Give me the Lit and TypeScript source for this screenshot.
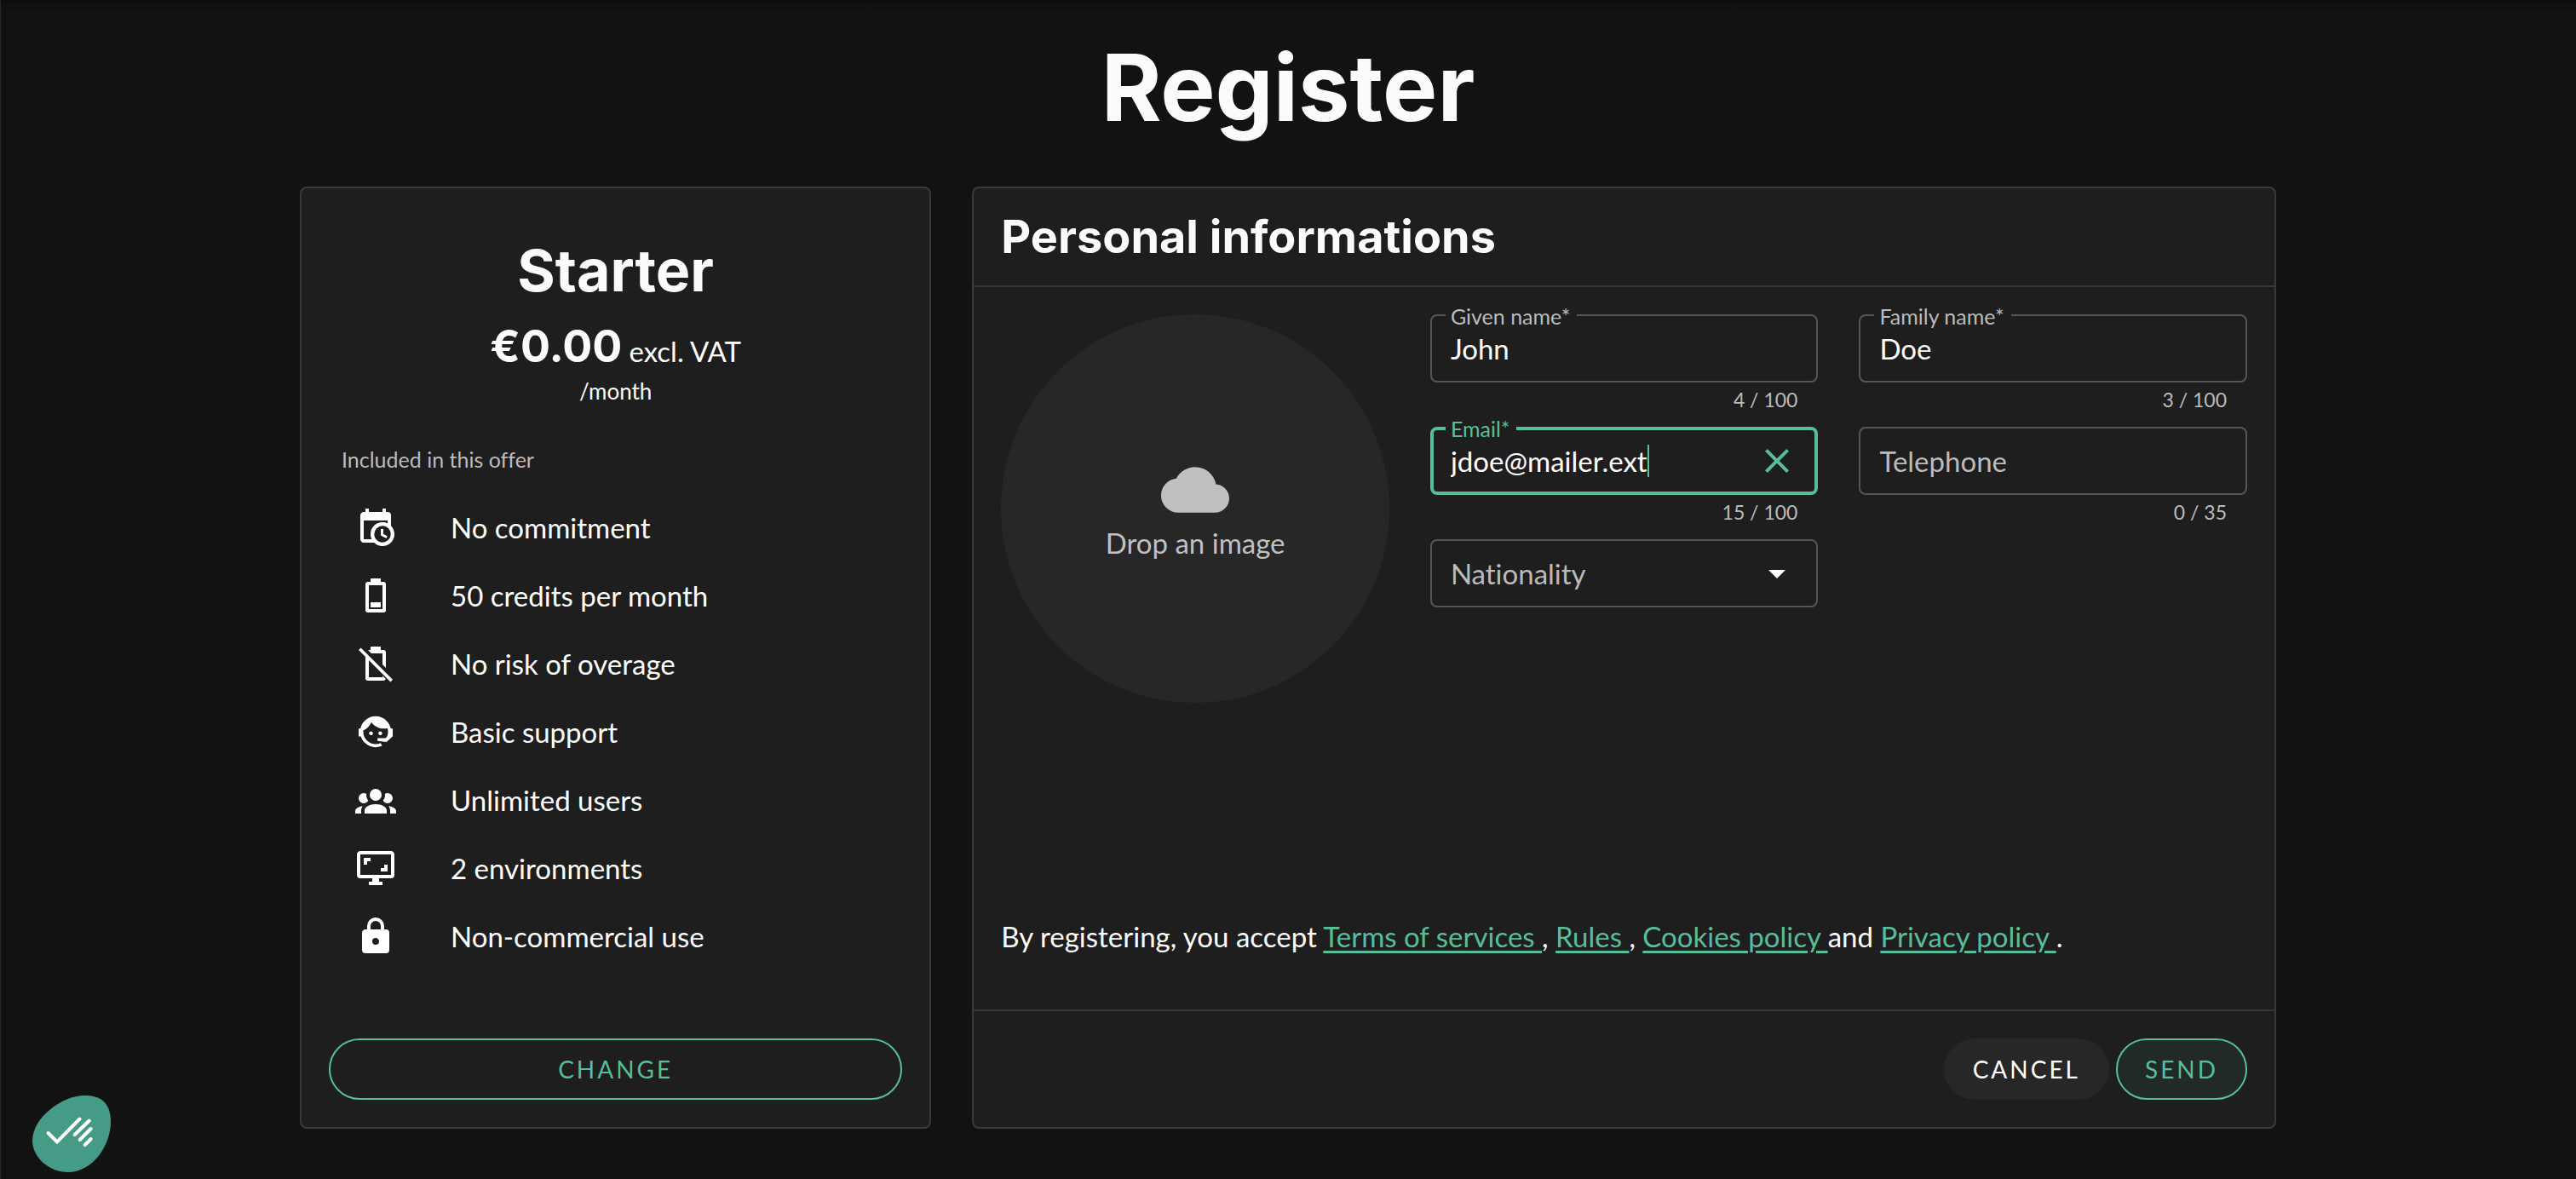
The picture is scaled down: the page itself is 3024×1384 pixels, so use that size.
import { LitElement, html, css, svg, nothing } from "lit";
import { customElement, property } from "lit/decorators.js";

const icons = {
  calendarClock:
    "M15,13H16.5V15.82L18.94,17.23L18.19,18.53L15,16.69V13M19,8H5V19H9.67C9.24,18.09 9,17.07 9,16A7,7 0 0,1 16,9C17.07,9 18.09,9.24 19,9.67V8M5,21C3.89,21 3,20.1 3,19V5C3,3.89 3.89,3 5,3H6V1H8V3H16V1H18V3H19A2,2 0 0,1 21,5V11.1C22.24,12.36 23,14.09 23,16A7,7 0 0,1 16,23C14.09,23 12.36,22.24 11.1,21H5M16,11.15A4.85,4.85 0 0,0 11.15,16C11.15,18.68 13.32,20.85 16,20.85A4.85,4.85 0 0,0 20.85,16C20.85,13.32 18.68,11.15 16,11.15Z",
  batteryLow:
    "M16,20H8V6H16M16.67,4H15V2H9V4H7.33C6.6,4 6,4.6 6,5.33V20.67C6,21.4 6.6,22 7.33,22H16.67A1.33,1.33 0 0,0 18,20.67V5.33C18,4.6 17.4,4 16.67,4M15,16H9V19H15V16",
  batteryOff:
    "M9 4V2h6v2h1.67C17.4 4 18 4.6 18 5.33v9.2l-2-2V6H9.47L7.5 4zM8 20V9.1L6 7.1v13.57C6 21.4 6.6 22 7.33 22h9.34c.6 0 1.1-.4 1.27-.95L16 19.1V20zM3.27 2.7 2 3.97 20.73 22.7 22 21.43z",
  agent:
    "M18.72,14.76C19.07,13.91 19.26,13 19.26,12C19.26,11.28 19.15,10.59 18.96,9.95C18.31,10.1 17.63,10.18 16.92,10.18C13.86,10.18 11.15,8.67 9.5,6.34C8.61,8.5 6.91,10.26 4.77,11.22C4.73,11.47 4.73,11.74 4.73,12A7.27,7.27 0 0,0 12,19.27C13.05,19.27 14.06,19.04 14.97,18.63C15.54,19.72 15.8,20.26 15.78,20.26C14.14,20.81 12.87,21.08 12,21.08C9.58,21.08 7.27,20.13 5.57,18.42C4.53,17.38 3.76,16.11 3.33,14.73H2V10.18H3.09C3.93,6.04 7.6,2.92 12,2.92C14.4,2.92 16.71,3.87 18.42,5.58C19.69,6.84 20.54,8.45 20.89,10.18H22V14.73H21.94L18.38,18L13.08,17.4V15.73H17.91L18.72,14.76M9.27,11.77C9.57,11.77 9.86,11.89 10.07,12.11C10.28,12.32 10.4,12.61 10.4,12.91C10.4,13.21 10.28,13.5 10.07,13.71C9.86,13.92 9.57,14.04 9.27,14.04C8.64,14.04 8.13,13.54 8.13,12.91C8.13,12.28 8.64,11.77 9.27,11.77M14.72,11.77C15.35,11.77 15.85,12.28 15.85,12.91C15.85,13.54 15.35,14.04 14.72,14.04C14.09,14.04 13.58,13.54 13.58,12.91A1.14,1.14 0 0,1 14.72,11.77Z",
  group:
    "M12,5.5A3.5,3.5 0 0,1 15.5,9A3.5,3.5 0 0,1 12,12.5A3.5,3.5 0 0,1 8.5,9A3.5,3.5 0 0,1 12,5.5M5,8C5.56,8 6.08,8.15 6.53,8.42C6.38,9.85 6.8,11.27 7.66,12.38C7.16,13.34 6.16,14 5,14A3,3 0 0,1 2,11A3,3 0 0,1 5,8M19,8A3,3 0 0,1 22,11A3,3 0 0,1 19,14C17.84,14 16.84,13.34 16.34,12.38C17.2,11.27 17.62,9.85 17.47,8.42C17.92,8.15 18.44,8 19,8M5.5,18.25C5.5,16.18 8.41,14.5 12,14.5C15.59,14.5 18.5,16.18 18.5,18.25V20H5.5V18.25M0,20V18.5C0,17.11 1.89,15.94 4.45,15.6C3.86,16.28 3.5,17.22 3.5,18.25V20H0M24,20H20.5V18.25C20.5,17.22 20.14,16.28 19.55,15.6C22.11,15.94 24,17.11 24,18.5V20Z",
  monitor:
    "M9,6H5V10H7V8H9V6M19,10H17V12H15V14H19V10M21,16H3V4H21M21,2H3C1.89,2 1,2.89 1,4V16A2,2 0 0,0 3,18H10V20H8V22H16V20H14V18H21A2,2 0 0,0 23,16V4C23,2.89 22.1,2 21,2",
  lock: "M12,17A2,2 0 0,0 14,15C14,13.89 13.1,13 12,13A2,2 0 0,0 10,15A2,2 0 0,0 12,17M18,8A2,2 0 0,1 20,10V20A2,2 0 0,1 18,22H6A2,2 0 0,1 4,20V10C4,8.89 4.9,8 6,8H7V6A5,5 0 0,1 12,1A5,5 0 0,1 17,6V8H18M12,3A3,3 0 0,0 9,6V8H15V6A3,3 0 0,0 12,3Z",
  cloud:
    "M19.35,10.04C18.67,6.59 15.64,4 12,4C9.11,4 6.6,5.64 5.35,8.04C2.34,8.36 0,10.91 0,14A6,6 0 0,0 6,20H19A5,5 0 0,0 24,15C24,12.36 21.95,10.22 19.35,10.04Z",
  close:
    "M19,6.41L17.59,5L12,10.59L6.41,5L5,6.41L10.59,12L5,17.59L6.41,19L12,13.41L17.59,19L19,17.59L13.41,12L19,6.41Z",
  menuDown: "M7,10L12,15L17,10H7Z",
};

const icon = (path: string) =>
  html`<svg class="icon" viewBox="0 0 24 24" aria-hidden="true">${svg`<path d=${path}></path>`}</svg>`;

const features: Array<[string, string]> = [
  [icons.calendarClock, "No commitment"],
  [icons.batteryLow, "50 credits per month"],
  [icons.batteryOff, "No risk of overage"],
  [icons.agent, "Basic support"],
  [icons.group, "Unlimited users"],
  [icons.monitor, "2 environments"],
  [icons.lock, "Non-commercial use"],
];

const base = css`
  *,
  *::before,
  *::after {
    box-sizing: border-box;
  }
  .icon {
    display: block;
    width: 48px;
    height: 48px;
    flex: none;
    fill: currentColor;
  }
`;

@customElement("text-field")
class TextField extends LitElement {
  @property() label = "";
  @property() value = "";
  @property() type = "text";
  @property({ type: Number }) max = 100;
  @property({ type: Boolean, reflect: true }) active = false;

  static styles = [
    base,
    css`
      :host {
        display: block;
      }
      .box {
        position: relative;
        display: flex;
        align-items: center;
        height: 80px;
        padding: 0 22px;
        border: 2px solid #565656;
        border-radius: 8px;
        cursor: text;
      }
      .label {
        position: absolute;
        left: 22px;
        color: #bbbbbb;
      }
      .floating {
        top: -16px;
        left: 16px;
        padding: 0 8px 0 6px;
        font-size: 25px;
        line-height: 32px;
        background: #1e1e1e;
      }
      .input {
        width: 100%;
        height: 48px;
        padding: 0;
        border: 0;
        outline: 0;
        background: transparent;
        color: #ffffff;
        font: inherit;
      }
      .counter {
        padding: 4px 24px 0;
        height: 52px;
        font-size: 23px;
        line-height: 32px;
        text-align: right;
        color: #bbbbbb;
      }
      .caret {
        width: 2px;
        height: 38px;
        background: #57be9b;
      }
      .clear {
        margin-left: auto;
        padding: 0;
        border: 0;
        background: none;
        color: #57be9b;
      }
      :host([active]) .box {
        padding: 0 20px;
        border: 4px solid #57be9b;
      }
      :host([active]) .label {
        top: -18px;
        left: 14px;
        color: #57be9b;
      }
      :host([active]) .input {
        width: auto;
        field-sizing: content;
      }
    `,
  ];

  render() {
    const floating = this.active || this.value !== "";
    return html`
      <div class="box">
        <label class="label ${floating ? "floating" : ""}" for="input">${this.label}</label>
        <input class="input" id="input" type=${this.type} .value=${this.value} />
        ${this.active
          ? html`<span class="caret"></span>
              <button class="clear" type="button" aria-label="Clear ${this.label}">${icon(icons.close)}</button>`
          : nothing}
      </div>
      <div class="counter">${this.value.length} / ${this.max}</div>
    `;
  }
}

@customElement("app-root")
class AppRoot extends LitElement {
  static styles = [
    base,
    css`
      :host {
        display: block;
        box-sizing: border-box;
        min-height: 100vh;
        padding: 0 32px 60px;
        box-shadow: inset 1px 0 #262626;
        color: #ffffff;
        background: linear-gradient(#0d0d0d, #121212 14px);
        font-family: Lato, "Liberation Sans", sans-serif;
        font-size: 33px;
        line-height: 48px;
        font-variant-ligatures: none;
      }
      h1,
      h2,
      p,
      ul {
        margin: 0;
        padding: 0;
      }
      h1,
      h2,
      .amount {
        font-family: Inter, "Liberation Sans", sans-serif;
        font-weight: 700;
        color: #fbfbfb;
      }
      .title {
        padding: 53px 0 66px;
        font-size: 108px;
        line-height: 100px;
        text-align: center;
      }
      .layout {
        display: grid;
        grid-template-columns: repeat(12, minmax(0, 1fr));
        gap: 48px;
        max-width: 2320px;
        margin: 0 auto;
      }
      .card {
        display: flex;
        flex-direction: column;
        border: 2px solid #393939;
        border-radius: 8px;
        background: #1e1e1e;
      }
      .plan {
        grid-column: span 4;
        padding: 54px 32px 32px;
      }
      .details {
        grid-column: span 8;
      }
      .plan-name {
        font-size: 68px;
        line-height: 84px;
        text-align: center;
      }
      .price {
        display: flex;
        justify-content: center;
        align-items: baseline;
        gap: 8px;
        height: 64px;
        margin-top: 16px;
        line-height: 64px;
      }
      .amount {
        font-size: 52px;
      }
      .period {
        font-size: 26px;
        line-height: 40px;
        text-align: center;
      }
      .included {
        margin-top: 20px;
        padding: 0 15px;
        font-size: 25px;
        line-height: 80px;
        color: #bbbbbb;
      }
      .features {
        margin-bottom: 80px;
        padding: 0 31px;
        list-style: none;
      }
      .feature {
        display: flex;
        align-items: center;
        gap: 64px;
        height: 80px;
      }
      .button {
        height: 72px;
        padding: 0 32px;
        border: 2px solid transparent;
        border-radius: 36px;
        background: transparent;
        color: #ffffff;
        font: inherit;
        font-size: 28px;
        letter-spacing: 3px;
        text-transform: uppercase;
      }
      .outlined {
        border-color: #57be9b;
        color: #57be9b;
      }
      .muted {
        background: #272727;
      }
      .tinted {
        background: #222a28;
      }
      .plan .button {
        margin-top: auto;
      }
      .card-head {
        padding: 25px 32px;
        font-size: 54px;
        line-height: 64px;
        border-bottom: 2px solid #393939;
      }
      .card-body {
        display: flex;
        flex: 1;
        flex-direction: column;
        justify-content: space-between;
        padding: 32px;
      }
      .form {
        display: grid;
        grid-template-columns: repeat(3, minmax(0, 1fr));
        gap: 48px;
      }
      .drop {
        display: flex;
        flex-direction: column;
        align-items: center;
        justify-content: center;
        aspect-ratio: 1;
        padding: 0;
        border: 0;
        border-radius: 50%;
        background: #272727;
        color: #c0c0c0;
        font: inherit;
        line-height: 44px;
      }
      .drop .icon {
        width: 80px;
        height: 80px;
      }
      .fields {
        display: grid;
        grid-column: span 2;
        grid-template-columns: repeat(2, minmax(0, 1fr));
        column-gap: 48px;
        align-content: start;
      }
      .select-box {
        display: grid;
        grid-template-columns: minmax(0, 1fr) 48px;
        align-items: center;
        height: 80px;
        padding: 0 22px;
        border: 2px solid #565656;
        border-radius: 8px;
      }
      .select-label {
        grid-area: 1 / 1;
        color: #bbbbbb;
      }
      .select-box .icon {
        grid-area: 1 / 2;
      }
      .select {
        grid-area: 1 / 1 / 2 / 3;
        height: 48px;
        border: 0;
        outline: 0;
        appearance: none;
        background: transparent;
        color: #ffffff;
        font: inherit;
      }
      .terms {
        padding: 32px 0 30px;
      }
      .link {
        color: #57be9b;
        text-decoration: underline;
        text-decoration-thickness: 3px;
        text-underline-offset: 4px;
        white-space: pre;
      }
      .card-foot {
        display: flex;
        justify-content: flex-end;
        gap: 8px;
        padding: 32px;
        border-top: 2px solid #393939;
      }
      .consent {
        position: fixed;
        left: 37px;
        bottom: 8px;
        padding: 0;
        border: 0;
        background: none;
      }
      .consent-art {
        display: block;
        width: 94px;
        height: 90px;
      }
    `,
  ];

  render() {
    return html`
      <h1 class="title">Register</h1>
      <main class="layout">
        <section class="card plan">
          <h2 class="plan-name">Starter</h2>
          <p class="price"><span class="amount">€0.00</span><span>excl. VAT</span></p>
          <p class="period">/month</p>
          <p class="included">Included in this offer</p>
          <ul class="features">
            ${features.map(([path, text]) => html`<li class="feature">${icon(path)}<span>${text}</span></li>`)}
          </ul>
          <button class="button outlined" type="button">Change</button>
        </section>

        <form class="card details">
          <h2 class="card-head">Personal informations</h2>
          <div class="card-body">
            <div class="form">
              <button class="drop" type="button">${icon(icons.cloud)}<span>Drop an image</span></button>
              <div class="fields">
                <text-field label="Given name*" value="John"></text-field>
                <text-field label="Family name*" value="Doe"></text-field>
                <text-field label="Email*" value="jdoe@mailer.ext" active></text-field>
                <text-field label="Telephone" type="tel" max="35"></text-field>
                <div class="select-box">
                  <label class="select-label" for="nationality">Nationality</label>
                  ${icon(icons.menuDown)}
                  <select class="select" id="nationality">
                    <option value=""></option>
                  </select>
                </div>
              </div>
            </div>
            <p class="terms">
              By registering, you accept
              <a class="link" href="#terms">Terms of services </a>, <a class="link" href="#rules">Rules </a>,
              <a class="link" href="#cookies">Cookies policy </a>and
              <a class="link" href="#privacy">Privacy policy </a>.
            </p>
          </div>
          <div class="card-foot">
            <button class="button muted" type="button">Cancel</button>
            <button class="button outlined tinted" type="button">Send</button>
          </div>
        </form>
      </main>

      <button class="consent" type="button" aria-label="Cookie preferences">
        <svg class="consent-art" viewBox="0 0 94 90" aria-hidden="true">
          <path
            fill="#459b85"
            d="M62 0C80 0 93 7 93 31C93 58 72 90 43 90C20 90 1 72 1 53C1 26 36 0 62 0Z"
          ></path>
          <path
            fill="none"
            stroke="#ffffff"
            stroke-width="4"
            stroke-linecap="round"
            d="M19.5 44 30 54.5 56.5 27.5M67.7 29.5 50.7 46M69.7 39 56.7 52M69.7 51 62.7 58"
          ></path>
        </svg>
      </button>
    `;
  }
}
